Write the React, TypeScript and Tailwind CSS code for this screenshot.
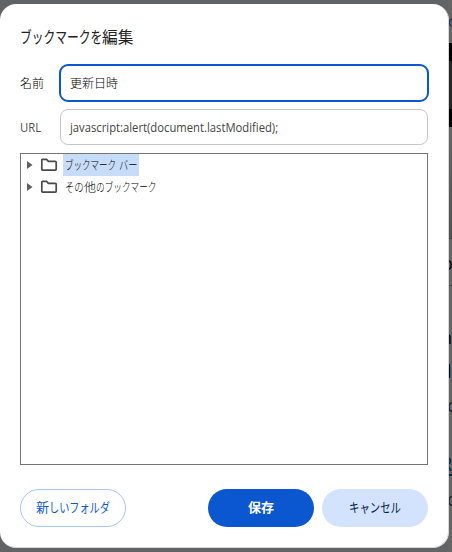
import React from "react";

type RunProps = { children: React.ReactNode; width: string; scale: string };

// A run of condensed glyphs occupying a fixed advance width.
function Run({ children, width, scale }: RunProps) {
  return (
    <span className={`inline-block whitespace-pre ${width}`}>
      <span className={`inline-block origin-left ${scale}`}>{children}</span>
    </span>
  );
}

function Folder() {
  return (
    <svg className="ml-[7px] shrink-0" width="18" height="14" viewBox="0 0 18 14" fill="none">
      <path
        d="M2.5 1.4H6.6L8.4 3.3H15.3Q16.2 3.3 16.2 4.2V11.2Q16.2 12.1 15.3 12.1H2.7Q1.8 12.1 1.8 11.2V2.2Q1.8 1.4 2.5 1.4Z"
        stroke="#4a4a4a"
        strokeWidth="1.7"
      />
    </svg>
  );
}

function TreeRow({ selected, children }: { selected?: boolean; children: React.ReactNode }) {
  return (
    <div className="flex h-[22px] items-center pl-[6px]">
      <svg className="shrink-0" width="6" height="8" viewBox="0 0 6 8">
        <path d="M0 0L5.5 4L0 8Z" fill="#606060" />
      </svg>
      <Folder />
      <div
        className={`ml-[5px] flex h-[22px] items-center px-[2px] pt-[2px] text-[12px] leading-[20px] font-light text-black ${
          selected ? "bg-[#c7dcf8]" : ""
        }`}
      >
        {children}
      </div>
    </div>
  );
}

function PageEdge() {
  return (
    <div className="absolute inset-y-0 right-0 w-[4px] overflow-hidden bg-[#666666] text-[18px] leading-none text-black">
      <div className="absolute top-[43px] h-[84px] w-full border-t-[18px] border-b-[18px] border-black bg-[#252525]" />
      <div className="absolute top-[127px] h-[111px] w-full bg-linear-to-b from-[#666666] to-[#515151]" />
      <div className="absolute top-[238px] h-px w-full bg-[#444444]" />
      <div className="absolute top-[285px] h-px w-full bg-[#444444]" />
      <span className="absolute top-[16px] left-0 text-[13px] text-[#172b49]">G</span>
      <span className="absolute top-[254px] -left-[6px]">o</span>
      <span className="absolute top-[328px] -left-[7px]">n</span>
      <span className="absolute top-[362px] -left-[1px]">l</span>
      <span className="absolute top-[396px] -left-[1px] text-[#222222]">c</span>
      <span className="absolute top-[454px] -left-[8px] text-[20px] text-[#10263c]">R</span>
      <div className="absolute top-[474px] h-[2px] w-full bg-[#10263c]" />
      <span className="absolute top-[490px] -left-[1px] text-[#222222]">c</span>
    </div>
  );
}

export default function App() {
  return (
    <div className="relative h-[552px] w-[452px] overflow-hidden bg-[#626365] pt-[4px] font-['Open_Sans','Noto_Sans_CJK_JP',sans-serif] text-[#202124]">
      <PageEdge />
      <div className="relative flex h-[544px] w-[449px] flex-col rounded-[16px] border-r border-b border-[#d6d6d6] bg-white pl-[20px]">
        <h1 className="mt-[21px] flex h-[24px] items-center text-[16px] leading-[24px] font-normal">
          <Run width="w-[82px]" scale="scale-x-[0.735]">ブックマークを</Run>
          <Run width="w-[32px]" scale="scale-x-[0.98]">編集</Run>
        </h1>
        <div className="mt-[15px] flex h-[38px] w-[409px] items-center">
          <label className="w-[39px] shrink-0 pt-[2px] text-[12px] font-light text-black">名前</label>
          <div className="flex h-[38px] w-[370px] items-center rounded-[9px] border-2 border-[#0b57d0] pt-[2px] pl-[9px] text-[12px] text-black">
            <span className="font-light">更新日時</span>
          </div>
        </div>
        <div className="mt-[7px] flex h-[36px] w-[408px] items-center">
          <label className="w-[40px] shrink-0 pt-[2px] text-[12px] text-[#505050]">
            <Run width="w-[24px]" scale="scale-x-[0.94]">URL</Run>
          </label>
          <div className="flex h-[36px] w-[368px] items-center rounded-[8px] border border-[#c7c7c7] pt-[2px] pl-[9px] text-[12px] text-[#444444]">
            <Run width="w-[210px]" scale="scale-x-[0.938]">javascript:alert(document.lastModified);</Run>
          </div>
        </div>
        <div className="mt-[8px] h-[312px] w-[408px] border border-[#757575]">
          <TreeRow selected>
            <Run width="w-[54px]" scale="scale-x-[0.71]">ブックマーク</Run>
            <Run width="w-[18px]" scale="scale-x-[0.77]">バー</Run>
          </TreeRow>
          <TreeRow>
            <Run width="w-[19px]" scale="scale-x-[0.78]">その</Run>
            <Run width="w-[12px]" scale="scale-x-100">他</Run>
            <Run width="w-[60px]" scale="scale-x-[0.72]">のブックマーク</Run>
          </TreeRow>
        </div>
        <div className="mt-[24px] flex h-[38px] w-[408px] text-[13px] font-normal">
          <button className="flex w-[106px] items-center rounded-full border border-[#a8c7fa] pl-[15px] text-[#0b57d0]">
            <Run width="w-[13px]" scale="scale-x-100">新</Run>
            <Run width="w-[60px]" scale="scale-x-[0.78]">しいフォルダ</Run>
          </button>
          <button className="ml-auto flex w-[106px] items-center justify-center rounded-full bg-[#0b57d0] font-bold text-white">
            保存
          </button>
          <button className="ml-[8px] flex w-[106px] items-center justify-center rounded-full bg-[#d3e3fd] text-[#041e49]">
            <Run width="w-[52px]" scale="scale-x-[0.80]">キャンセル</Run>
          </button>
        </div>
      </div>
    </div>
  );
}
